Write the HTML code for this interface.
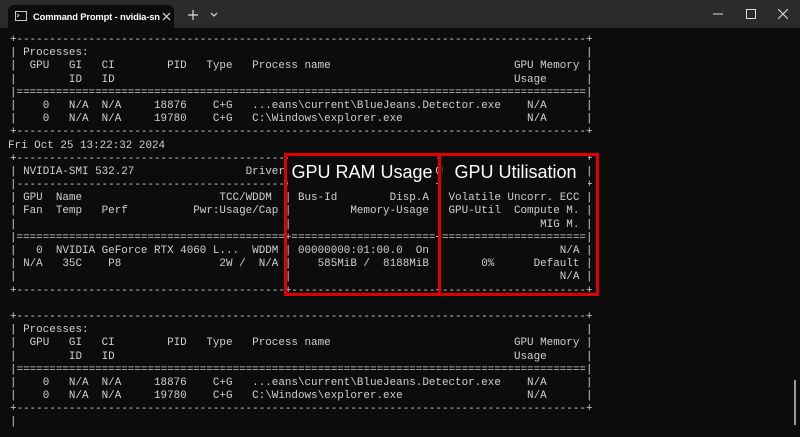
<!DOCTYPE html>
<html><head><style>
body{margin:0;width:800px;height:437px;background:#0c0c0c;overflow:hidden;position:relative;font-family:"Liberation Sans",sans-serif}
.tb{position:absolute;left:0;top:0;width:800px;height:28px;background:#2b2b2b}
.tab{position:absolute;left:8px;top:5px;width:166px;height:23px;background:#0c0c0c;border-radius:6px 6px 0 0}
.tab span{position:absolute;left:25px;top:6px;color:#fff;font-size:9.4px;font-weight:bold;white-space:nowrap;letter-spacing:-0.15px}
pre{position:absolute;left:10px;top:34px;margin:0;font-family:"Liberation Mono",monospace;font-size:10.92px;line-height:13.18px;color:#d0d0d0}
.rb{position:absolute;border:3px solid #e00000;box-sizing:border-box}
.lab{position:absolute;background:#0c0c0c;color:#fff;font-size:18px;text-align:center;line-height:30px}
</style></head><body>
<div class="tb">
<div class="tab">
<svg style="position:absolute;left:7px;top:6px" width="12" height="10"><rect x="0.5" y="0.5" width="11" height="9" fill="none" stroke="#ccc"/><path d="M2 3l2 1.5L2 6" stroke="#ccc" fill="none"/></svg>
<span>Command Prompt - nvidia-sn</span>
<svg style="position:absolute;left:154px;top:7px" width="9" height="9"><path d="M1 1L8 8M8 1L1 8" stroke="#ddd" stroke-width="1.2"/></svg>
</div>
<svg style="position:absolute;left:188px;top:10px" width="10" height="10"><path d="M5 0V10M0 5H10" stroke="#ddd" stroke-width="1.2"/></svg>
<svg style="position:absolute;left:210px;top:12px" width="8" height="6"><path d="M1 1L4 4L7 1" stroke="#ddd" fill="none" stroke-width="1.2"/></svg>
<svg style="position:absolute;left:713px;top:13px" width="10" height="2"><path d="M0 1H10" stroke="#ddd"/></svg>
<svg style="position:absolute;left:746px;top:9px" width="10" height="10"><rect x="0.5" y="0.5" width="9" height="9" fill="none" stroke="#ddd"/></svg>
<svg style="position:absolute;left:778px;top:9px" width="10" height="10"><path d="M0 0L10 10M10 0L0 10" stroke="#ddd" stroke-width="1.1"/></svg>
</div>
<pre>
+---------------------------------------------------------------------------------------+
| Processes:                                                                            |
|  GPU   GI   CI        PID   Type   Process name                            GPU Memory |
|        ID   ID                                                             Usage      |
|=======================================================================================|
|    0   N/A  N/A     18876    C+G   ...eans\current\BlueJeans.Detector.exe    N/A      |
|    0   N/A  N/A     19780    C+G   C:\Windows\explorer.exe                   N/A      |
+---------------------------------------------------------------------------------------+
<span style="position:relative;left:-2px">Fri Oct 25 13:22:32 2024</span>
+---------------------------------------------------------------------------------------+
| NVIDIA-SMI 532.27                 Driver Version: 532.27       CUDA Version: 12.2     |
|-----------------------------------------+----------------------+----------------------+
| GPU  Name                     TCC/WDDM  | Bus-Id        Disp.A | Volatile Uncorr. ECC |
| Fan  Temp   Perf          Pwr:Usage/Cap |         Memory-Usage | GPU-Util  Compute M. |
|                                         |                      |               MIG M. |
|=========================================+======================+======================|
|   0  NVIDIA GeForce RTX 4060 L...  WDDM | 00000000:01:00.0  On |                  N/A |
| N/A   35C    P8               2W /  N/A |    585MiB /  8188MiB |      0%      Default |
|                                         |                      |                  N/A |
+-----------------------------------------+----------------------+----------------------+

+---------------------------------------------------------------------------------------+
| Processes:                                                                            |
|  GPU   GI   CI        PID   Type   Process name                            GPU Memory |
|        ID   ID                                                             Usage      |
|=======================================================================================|
|    0   N/A  N/A     18876    C+G   ...eans\current\BlueJeans.Detector.exe    N/A      |
|    0   N/A  N/A     19780    C+G   C:\Windows\explorer.exe                   N/A      |
+---------------------------------------------------------------------------------------+
|
</pre>
<div class="lab" style="left:288px;top:157px;width:148px;height:32px">GPU RAM Usage</div>
<div class="lab" style="left:443px;top:157px;width:145px;height:32px">GPU Utilisation</div>
<div class="rb" style="left:284px;top:153px;width:157px;height:143px"></div>
<div class="rb" style="left:438px;top:153px;width:161px;height:143px"></div>
<div style="position:absolute;left:794px;top:380px;width:2px;height:45px;background:#999"></div>
</body></html>
